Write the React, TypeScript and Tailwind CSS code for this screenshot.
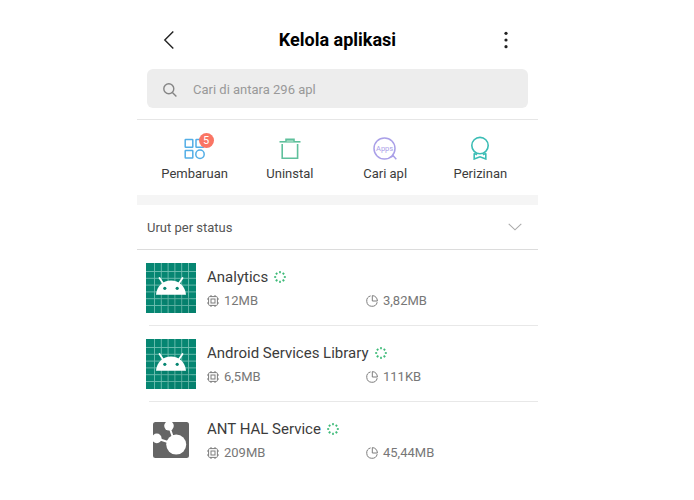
import { useState } from 'react';

const apps = [
  { name: 'Analytics', memory: '12MB', usage: '3,82MB', icon: 'android' },
  { name: 'Android Services Library', memory: '6,5MB', usage: '111KB', icon: 'android' },
  { name: 'ANT HAL Service', memory: '209MB', usage: '45,44MB', icon: 'ant' },
];

const actions = [
  { label: 'Pembaruan', icon: <UpdatesIcon />, count: 5 },
  { label: 'Uninstal', icon: <TrashIcon /> },
  { label: 'Cari apl', icon: <FindAppsIcon /> },
  { label: 'Perizinan', icon: <PermissionsIcon /> },
];

function UpdatesIcon() {
  return (
    <svg width="22" height="24" viewBox="0 0 22 24" fill="none" stroke="#53aee6" strokeWidth="1.5" aria-hidden="true">
      <rect x="1.2" y="3.6" width="7.6" height="7.6" rx="0.5" />
      <rect x="12" y="3.6" width="7.6" height="7.6" rx="0.5" />
      <rect x="1.2" y="14.4" width="7.6" height="7.6" rx="0.5" />
      <circle cx="16" cy="18.2" r="4.2" />
    </svg>
  );
}

function TrashIcon() {
  return (
    <svg width="22" height="24" viewBox="0 0 22 24" fill="none" stroke="#5fc09c" strokeWidth="1.6" aria-hidden="true">
      <path d="M0.5 5.8H21.5" />
      <path d="M7 5.8V3.4H15V5.8" fill="#a5dcc6" />
      <path d="M3.2 8V22.2H18.6V8" />
    </svg>
  );
}

function FindAppsIcon() {
  return (
    <svg width="24" height="24" viewBox="0 0 24 24" fill="none" stroke="#aaa0e8" strokeWidth="1.5" aria-hidden="true">
      <circle cx="11.5" cy="12.5" r="10.5" />
      <path d="M18 21.2L20.2 19.8L23.3 23.2" />
      <text x="11.6" y="15.2" textAnchor="middle" fontSize="7.5" fill="#aaa0e8" stroke="none">Apps</text>
    </svg>
  );
}

function PermissionsIcon() {
  return (
    <svg width="20" height="24" viewBox="0 0 20 24" fill="none" stroke="#3bbdb5" strokeWidth="1.6" aria-hidden="true">
      <circle cx="10" cy="9.6" r="8.2" />
      <path d="M4.2 17.2V23L10 20.8L15.8 23V17.2" />
      <path d="M4.2 17.4L7 18.8M15.8 17.4L13 18.8" />
    </svg>
  );
}

function AndroidIcon() {
  const lines = [8.5, 15.3, 22.1, 28.9, 35.7, 42.5];
  return (
    <svg width="50" height="50" viewBox="0 0 50 50" aria-hidden="true">
      <rect width="50" height="50" fill="#068672" />
      {lines.map((n) => (
        <path key={n} d={`M${n} 0V50M0 ${n}H50`} stroke="#70bfb1" strokeWidth="0.9" />
      ))}
      <path d="M10 31H40L50 41V50H26Z" fill="#00574b" opacity="0.12" />
      <path d="M13.5 15L17.5 21M36.5 15L32.5 21" stroke="#fff" strokeWidth="1.8" strokeLinecap="round" />
      <path d="M10 31.8C10.6 23.5 17 17.6 25 17.6S39.4 23.5 40 31.8Z" fill="#fff" />
      <circle cx="18.8" cy="25.3" r="1.6" fill="#068672" />
      <circle cx="31.2" cy="25.3" r="1.6" fill="#068672" />
    </svg>
  );
}

function AntIcon() {
  return (
    <svg width="36" height="36" viewBox="0 0 36 36" aria-hidden="true">
      <defs>
        <clipPath id="ant-tile">
          <rect width="36" height="36" rx="2.5" />
        </clipPath>
      </defs>
      <g clipPath="url(#ant-tile)">
        <rect width="36" height="36" fill="#656565" />
        <path d="M16 4L20.5 17M4 16.5L18 21" stroke="#fff" strokeWidth="2" />
        <circle cx="16" cy="3.8" r="4.8" fill="#fff" />
        <circle cx="3.8" cy="16.4" r="4.8" fill="#fff" />
        <circle cx="23.2" cy="22.6" r="10" fill="#fff" />
      </g>
    </svg>
  );
}

function RunningIcon() {
  return (
    <svg width="12" height="12" viewBox="0 0 12 12" fill="none" aria-hidden="true">
      <circle cx="6" cy="6" r="4.8" stroke="#3dba78" strokeWidth="1.9" pathLength="80" strokeDasharray="5 5" strokeDashoffset="2.5" />
    </svg>
  );
}

function ChipIcon() {
  return (
    <svg width="12" height="12" viewBox="0 0 12 12" fill="none" stroke="#7d7d7d" aria-hidden="true">
      <rect x="1.6" y="1.6" width="8.8" height="8.8" rx="1" />
      <rect x="4" y="4" width="4" height="4" />
      <path d="M4 0V1.5M8 0V1.5M4 10.5V12M8 10.5V12M0 4H1.5M0 8H1.5M10.5 4H12M10.5 8H12" />
    </svg>
  );
}

function PieIcon() {
  return (
    <svg width="12" height="12" viewBox="0 0 12 12" fill="none" stroke="#7d7d7d" aria-hidden="true">
      <path d="M4.6 0.9A5.3 5.3 0 1 0 11.2 7.2" />
      <path d="M6.3 0.6V6H11.4C11.4 3 9.2 0.6 6.3 0.6Z" />
    </svg>
  );
}

export default function App() {
  const [query, setQuery] = useState('');

  return (
    <div className="min-h-screen bg-white pl-[137px] pr-[156px] font-[Roboto,sans-serif] text-[#3c3c3c]">
      <header className="flex h-[69px] items-center justify-between px-6 pt-3 pb-0.5">
        <button type="button" aria-label="Kembali" className="flex h-6 w-4 items-center justify-center">
          <svg width="12" height="20" viewBox="0 0 12 20" fill="none" stroke="#222" strokeWidth="1.4" aria-hidden="true">
            <path d="M10.3 1.5L1.8 10L10.3 18.5" />
          </svg>
        </button>
        <h1 className="text-lg font-bold text-black">Kelola aplikasi</h1>
        <button type="button" aria-label="Opsi lainnya" className="flex h-6 w-4 items-center justify-center">
          <svg width="4" height="18" viewBox="0 0 4 18" fill="#222" aria-hidden="true">
            <circle cx="2" cy="2.3" r="1.6" />
            <circle cx="2" cy="9" r="1.6" />
            <circle cx="2" cy="15.7" r="1.6" />
          </svg>
        </button>
      </header>

      <div className="border-b border-[#e6e6e6] px-[10px] pb-[11px]">
        <label className="flex h-[39px] items-center gap-4 rounded-md bg-[#ededed] px-4 pt-0.5">
          <svg width="14" height="14" viewBox="0 0 14 14" fill="none" stroke="#858585" strokeWidth="1.4" className="shrink-0" aria-hidden="true">
            <circle cx="5.8" cy="5.8" r="5" />
            <path d="M9.4 9.4L13.4 13.4" />
          </svg>
          <input
            type="text"
            aria-label="Cari aplikasi"
            placeholder="Cari di antara 296 apl"
            value={query}
            onChange={(e) => setQuery(e.target.value)}
            className="w-full bg-transparent text-[13px] outline-none placeholder:text-[#999]"
          />
        </label>
      </div>

      <nav className="grid grid-cols-4 px-[10px] pt-4 pb-[11px]">
        {actions.map((action) => (
          <button key={action.label} type="button" className="flex flex-col items-center gap-1">
            <span className="relative">
              {action.icon}
              {action.count && (
                <span className="absolute -top-[3px] left-[15px] flex size-[15px] items-center justify-center rounded-full bg-[#fa7564] text-[11px] leading-none text-white">
                  {action.count}
                </span>
              )}
            </span>
            <span className="text-[13px] leading-5">{action.label}</span>
          </button>
        ))}
      </nav>

      <div className="h-[10px] bg-[#f5f5f5]" />

      <div className="grid h-[45px] items-center border-b border-[#dcdcdc] px-[10px]">
        <select aria-label="Urutkan" className="col-start-1 row-start-1 w-full appearance-none bg-transparent pt-0.5 text-[13px] text-[#555] outline-none">
          <option>Urut per status</option>
        </select>
        <svg width="14" height="8" viewBox="0 0 14 8" fill="none" stroke="#aaa" strokeWidth="1.1" className="pointer-events-none col-start-1 row-start-1 mr-1.5 justify-self-end" aria-hidden="true">
          <path d="M0.7 0.8L7 6.8L13.3 0.8" />
        </svg>
      </div>

      <ul className="pl-3">
        {apps.map((app) => (
          <li key={app.name} className="flex h-[76px] items-center border-b border-[#e8e8e8] pr-[10px] last:h-[75px] last:border-b-0">
            <div className="-ml-[3px] flex w-[50px] shrink-0 justify-center">
              {app.icon === 'android' ? <AndroidIcon /> : <AntIcon />}
            </div>
            <div className="ml-[11px] flex-1 pt-[3px]">
              <h2 className="flex items-center gap-1.5 text-[15px] leading-6">
                {app.name}
                <RunningIcon />
              </h2>
              <div className="grid grid-cols-2 pr-[3px] text-[13px] leading-6 text-[#777]">
                <span className="flex items-center gap-[5px]">
                  <ChipIcon />
                  {app.memory}
                </span>
                <span className="flex items-center gap-[5px]">
                  <PieIcon />
                  {app.usage}
                </span>
              </div>
            </div>
          </li>
        ))}
      </ul>
    </div>
  );
}
